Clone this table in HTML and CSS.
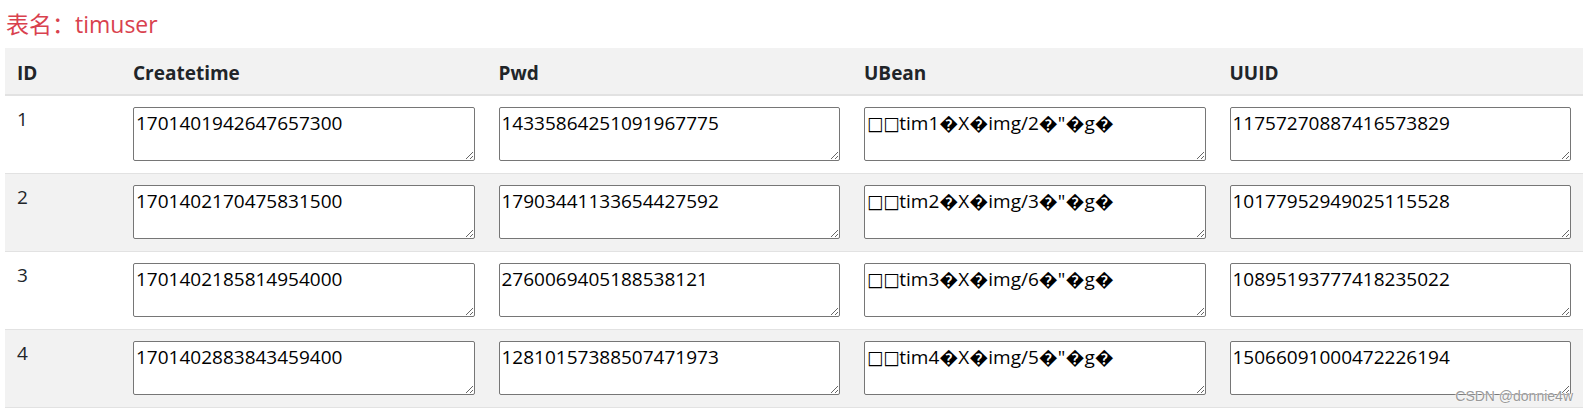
FILE: index.html
```html
<!DOCTYPE html>
<html lang="zh">
<head>
<meta charset="utf-8">
<title>timuser</title>
<link rel="stylesheet" href="styles.css">
</head>
<body>
<div class="page">
  <h3 class="table-name">表名：timuser</h3>
  <table class="data-table">
    <colgroup>
      <col class="col-id">
      <col>
      <col>
      <col>
      <col>
    </colgroup>
    <thead>
      <tr>
        <th>ID</th>
        <th>Createtime</th>
        <th>Pwd</th>
        <th>UBean</th>
        <th>UUID</th>
      </tr>
    </thead>
    <tbody>
      <tr>
        <td>1</td>
        <td><textarea class="cell-input">1701401942647657300</textarea></td>
        <td><textarea class="cell-input">14335864251091967775</textarea></td>
        <td><textarea class="cell-input">□□tim1�X�img/2�"�g�</textarea></td>
        <td><textarea class="cell-input">11757270887416573829</textarea></td>
      </tr>
      <tr>
        <td>2</td>
        <td><textarea class="cell-input">1701402170475831500</textarea></td>
        <td><textarea class="cell-input">17903441133654427592</textarea></td>
        <td><textarea class="cell-input">□□tim2�X�img/3�"�g�</textarea></td>
        <td><textarea class="cell-input">10177952949025115528</textarea></td>
      </tr>
      <tr>
        <td>3</td>
        <td><textarea class="cell-input">1701402185814954000</textarea></td>
        <td><textarea class="cell-input">2760069405188538121</textarea></td>
        <td><textarea class="cell-input">□□tim3�X�img/6�"�g�</textarea></td>
        <td><textarea class="cell-input">10895193777418235022</textarea></td>
      </tr>
      <tr>
        <td>4</td>
        <td><textarea class="cell-input">1701402883843459400</textarea></td>
        <td><textarea class="cell-input">12810157388507471973</textarea></td>
        <td><textarea class="cell-input">□□tim4�X�img/5�"�g�</textarea></td>
        <td><textarea class="cell-input">15066091000472226194</textarea></td>
      </tr>
    </tbody>
  </table>
  <div class="watermark">CSDN @donnie4w</div>
</div>
</body>
</html>
```

FILE: styles.css
```css
html, body {
  margin: 0;
  padding: 0;
  background: #ffffff;
}

body {
  font-family: "Open Sans", "Noto Sans CJK SC", sans-serif;
  color: #212529;
}

.page {
  position: relative;
  padding: 9px 4px 0 5px;
  height: 404px;
}

.table-name {
  margin: 0 0 9px 1px;
  font-size: 23px;
  font-weight: normal;
  line-height: 30px;
  color: #d9414e;
}

.data-table {
  width: 100%;
  border-collapse: collapse;
  table-layout: fixed;
  font-size: 19px;
}

.col-id {
  width: 116px;
}

.data-table th {
  text-align: left;
  font-weight: bold;
  line-height: 26px;
  padding: 12px 12px 8px;
  background: #f2f2f2;
  border-bottom: 2px solid #e2e2e2;
}

.data-table td {
  vertical-align: top;
  line-height: 24px;
  padding: 11px 12px 12px;
  border-top: 1px solid #e2e2e2;
}

.data-table tbody tr:nth-child(even) td {
  background: #f2f2f2;
}

.data-table tbody tr:last-child td {
  border-bottom: 1px solid #e2e2e2;
}

.cell-input {
  display: block;
  box-sizing: border-box;
  width: 100%;
  height: 54px;
  margin: 0;
  padding: 2px;
  font-family: "Open Sans", "DejaVu Sans Condensed", "DejaVu Sans", sans-serif;
  font-size: 19px;
  color: #000000;
  background: #ffffff;
  border: 1px solid #767676;
  border-radius: 2px;
}

.watermark {
  position: absolute;
  right: 14px;
  top: 388px;
  font-family: "Liberation Sans", Arial, sans-serif;
  font-size: 14px;
  color: #9a9a9a;
  text-shadow: 0 0 2px #ffffff, 0 0 1px #ffffff;
}
```
